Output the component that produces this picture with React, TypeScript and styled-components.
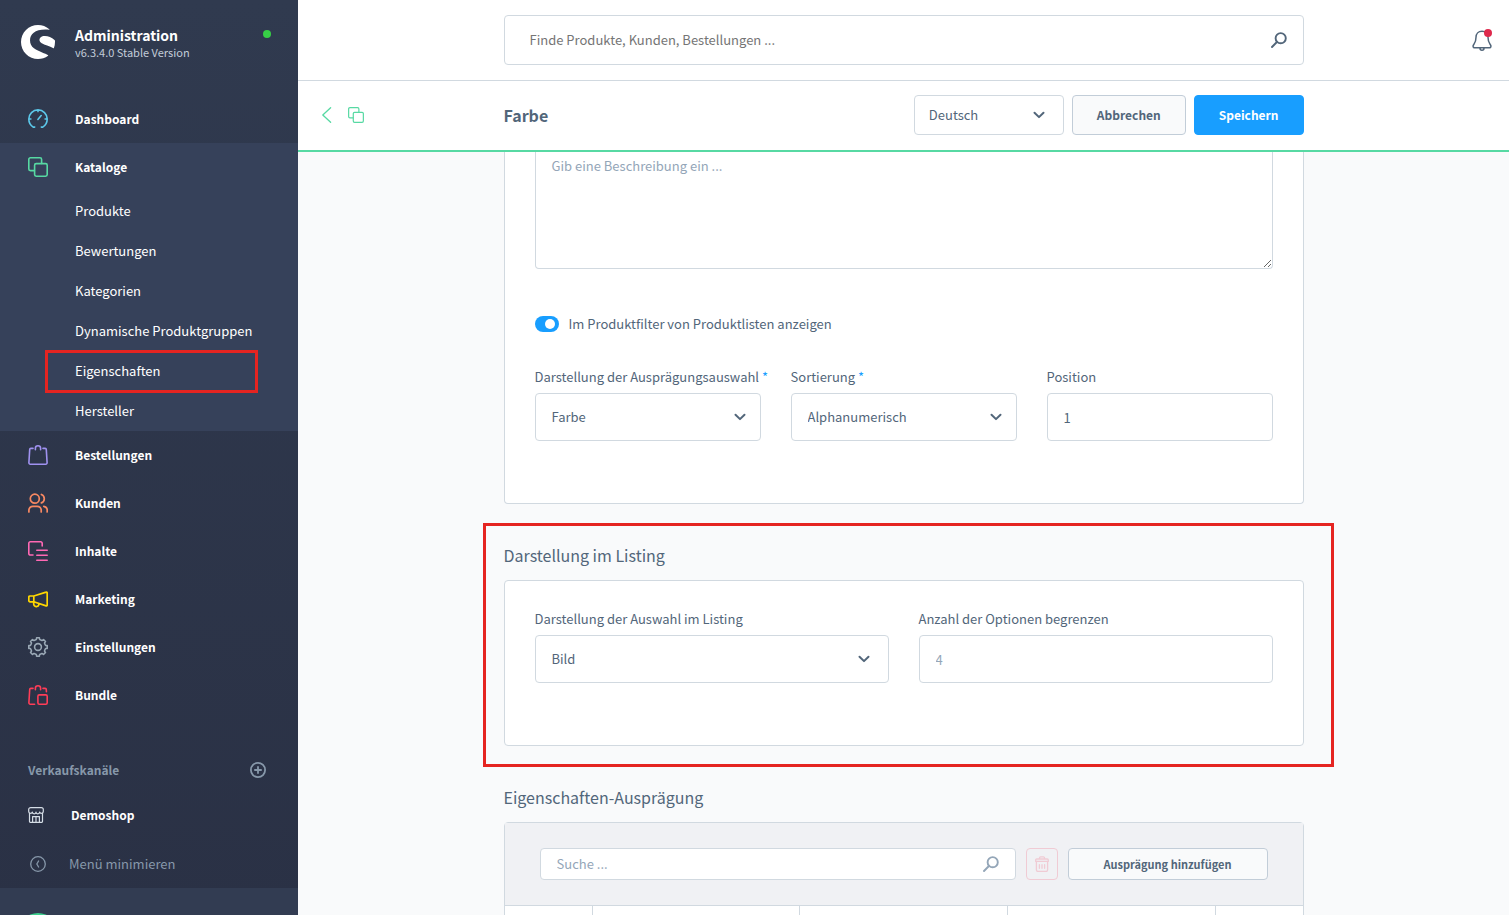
import React, { useState } from "react";
import styled, { createGlobalStyle } from "styled-components";
import { SiShopware } from "react-icons/si";

const color = {
  text: "#52667a",
  muted: "#94a6b8",
  border: "#d1d9e0",
  green: "#57d9a3",
  blue: "#189eff",
  page: "#f9fafb",
  mark: "#e52421",
};

const GlobalStyle = createGlobalStyle`
  *, *::before, *::after { box-sizing: border-box; }
  body {
    margin: 0;
    background: ${color.page};
    color: ${color.text};
    font-family: "Noto Sans CJK JP", "Open Sans", sans-serif;
    font-size: 13px;
    line-height: 20px;
  }
  button, input, select, textarea { font: inherit; color: inherit; }
  button { cursor: pointer; }
  h1, h2, p, ul { margin: 0; padding: 0; }
  ul { list-style: none; }
  a { color: inherit; text-decoration: none; }
`;

/* ---------- icons ---------- */

const Stroke = styled.svg.attrs({ fill: "none", stroke: "currentColor", "aria-hidden": true })`
  display: block;
  flex: none;
  stroke-linecap: round;
  stroke-linejoin: round;
`;

type IconProps = { size?: number; weight?: number };

const DashboardIcon = () => (
  <Stroke width="20" height="20" viewBox="0 0 20 20" strokeWidth="1.6">
    <path d="M6.7 18.1H5.2C2.5 16.5.8 13.6.8 10.1a9.2 9.2 0 0 1 18.4 0c0 3.5-1.7 6.4-4.4 8h-1.5M1 10h1.9M17.1 10H19M10 1v1.6M9.9 10.4l3.3-3.9" />
  </Stroke>
);

const CopyIcon = ({ size = 20, weight = 1.6 }: IconProps) => (
  <Stroke width={size} height={size} viewBox="0 0 20 20" strokeWidth={weight}>
    <path d="M6.4 13.6h-4A1.6 1.6 0 0 1 .8 12V2.4A1.6 1.6 0 0 1 2.4.8H12a1.6 1.6 0 0 1 1.6 1.6v4" />
    <rect x="6.6" y="6.6" width="12.6" height="12.6" rx="1.6" />
  </Stroke>
);

const BagIcon = () => (
  <Stroke width="20" height="20" viewBox="0 0 20 20" strokeWidth="1.6">
    <path d="M5 3.4H2.9a1.2 1.2 0 0 0-1.2 1.2L.9 17.7a1.4 1.4 0 0 0 1.4 1.5h15.4a1.4 1.4 0 0 0 1.4-1.5l-.8-13.1a1.2 1.2 0 0 0-1.2-1.2H15" />
    <path d="M7.4 4.8V3.2a2.6 2.4 0 0 1 5.2 0v1.6" />
  </Stroke>
);

const UsersIcon = () => (
  <Stroke width="20" height="20" viewBox="0 0 20 20" strokeWidth="1.7">
    <circle cx="6.8" cy="5.7" r="4.5" />
    <path d="M.9 18.9v-1.6a4 4 0 0 1 4-4h4.3a4 4 0 0 1 4 4v1.6M13.4 1.5a4.5 4.5 0 0 1 0 8.4M15.8 13.3a4 4 0 0 1 3.4 4v1.6" />
  </Stroke>
);

const ContentIcon = () => (
  <Stroke width="20" height="20" viewBox="0 0 20 20" strokeWidth="1.6">
    <path d="M5 14H2.3A1.5 1.5 0 0 1 .8 12.5V2.3A1.5 1.5 0 0 1 2.3.8h10.4a1.5 1.5 0 0 1 1.5 1.5V5M8.8 9.2h10.4M8.8 14.2h10.4M8.8 19.2h10.4" />
  </Stroke>
);

const MegaphoneIcon = () => (
  <Stroke width="20" height="20" viewBox="0 0 20 20" strokeWidth="1.7">
    <path d="M5.8 7H2A1.2 1.2 0 0 0 .8 8.2v3.4A1.2 1.2 0 0 0 2 12.8h3.8zM5.8 7l12.3-3.9a.8.8 0 0 1 1.1.8v12.2a.8.8 0 0 1-1.1.8L5.8 12.8M5.7 13v2a2.7 2.7 0 0 0 5.3.6l.2-.9" />
  </Stroke>
);

const gearOutline = (() => {
  const points: string[] = [];
  for (let tooth = 0; tooth < 8; tooth++) {
    const base = (tooth * Math.PI) / 4;
    [
      [-0.3, 7.5],
      [-0.2, 7.9],
      [-0.15, 9.3],
      [0.15, 9.3],
      [0.2, 7.9],
      [0.3, 7.5],
    ].forEach(([offset, radius]) => {
      const x = 10 + radius * Math.sin(base + offset);
      const y = 10 - radius * Math.cos(base + offset);
      points.push(`${x.toFixed(2)} ${y.toFixed(2)}`);
    });
  }
  return `M${points.join("L")}Z`;
})();

const GearIcon = () => (
  <Stroke width="20" height="20" viewBox="0 0 20 20" strokeWidth="1.6">
    <path d={gearOutline} />
    <circle cx="10" cy="10" r="3.4" />
  </Stroke>
);

const BundleIcon = () => (
  <Stroke width="20" height="20" viewBox="0 0 20 20" strokeWidth="1.6">
    <path d="M5 3.4H2.9a1.2 1.2 0 0 0-1.2 1.2L.9 17.7a1.4 1.4 0 0 0 1.4 1.5h4.3M15 3.4h2.1a1.2 1.2 0 0 1 1.2 1.2l.1 2M7.4 4.8V3.2a2.6 2.4 0 0 1 5.2 0v1.6" />
    <rect x="9.9" y="9.9" width="9.3" height="9.3" rx="1.4" />
  </Stroke>
);

const PlusCircleIcon = () => (
  <Stroke width="16" height="16" viewBox="0 0 16 16" strokeWidth="1.8">
    <circle cx="8" cy="8" r="7.1" />
    <path d="M8 4.9v6.2M4.9 8h6.2" />
  </Stroke>
);

const StoreIcon = () => (
  <Stroke width="16" height="16" viewBox="0 0 16 16" strokeWidth="1.2">
    <path d="M1.5 6.5v8.1a.8.8 0 0 0 .8.8h11.4a.8.8 0 0 0 .8-.8V6.5M.7 4.4V2.6a2 2 0 0 1 2-2h10.6a2 2 0 0 1 2 2v1.8a1.9 1.9 0 0 1-3.7.6 1.8 1.8 0 0 1-3.6 0 1.8 1.8 0 0 1-3.6 0 1.9 1.9 0 0 1-3.7-.6zM4.6 15.2V9.6h6.8v5.6M8 9.8v5.4" />
  </Stroke>
);

const CollapseIcon = () => (
  <Stroke width="16" height="16" viewBox="0 0 16 16" strokeWidth="1.3">
    <circle cx="8" cy="8" r="7.3" />
    <path d="M8.6 5L6.8 8l1.8 3" />
  </Stroke>
);

const SearchIcon = () => (
  <Stroke width="16" height="16" viewBox="0 0 16 16" strokeWidth="1.9">
    <circle cx="9.7" cy="6.2" r="5.1" />
    <path d="M5.9 10L1 15" />
  </Stroke>
);

const BellIcon = () => (
  <Stroke width="20" height="22" viewBox="0 0 20 22" strokeWidth="1.5">
    <path d="M10 2.2c-3.7 0-6 2.5-6 6.1 0 4.8-1 5.6-2.4 7.4-1 1.400-.6 3 .9 3h15c1.500 0 1.900-1.600.9-3C17 13.900 16 13.100 16 8.300c0-3.600-2.300-6.100-6-6.100zM8 19.200a2 2 0 0 0 4 0" />
  </Stroke>
);

const TrashIcon = () => (
  <Stroke width="14" height="16" viewBox="0 0 14 16" strokeWidth="1.3">
    <path d="M4.5 2.9V2A1.2 1.2 0 0 1 5.7.8h2.6A1.2 1.2 0 0 1 9.5 2v.9M.7 4a1 1 0 0 1 1-1h10.6a1 1 0 0 1 1 1v1.4H.7zM1.4 5.6v8.2A1.6 1.6 0 0 0 3 15.4h8a1.6 1.6 0 0 0 1.6-1.6V5.6M4.4 8.7v3.6M7 8.7v3.6M9.6 8.7v3.6" />
  </Stroke>
);

const ChevronDownIcon = () => (
  <Stroke width="12" height="8" viewBox="0 0 12 8" strokeWidth="2">
    <path d="M1.5 1.7L6 6.1l4.5-4.4" />
  </Stroke>
);

const ChevronLeftIcon = () => (
  <Stroke width="10" height="16" viewBox="0 0 10 16" strokeWidth="1.3">
    <path d="M8.6.7L.8 8l7.8 7.3" />
  </Stroke>
);

/* ---------- shell ---------- */

const Shell = styled.div`
  display: flex;
  height: 100vh;
  overflow: hidden;
`;

const Sidebar = styled.aside`
  display: flex;
  flex-direction: column;
  flex: none;
  width: 298px;
  overflow: hidden;
  background: linear-gradient(#303a4f, #2a3145);
  color: #fff;
  > * { flex: none; }
`;

const Brand = styled.div`
  display: flex;
  align-items: flex-start;
  height: 95px;
  padding: 25px 27px 0 21px;
`;

const BrandLogo = styled(SiShopware)`
  flex: none;
  width: 34px;
  height: 34px;
  margin-right: 20px;
`;

const BrandText = styled.div`
  flex: 1;
`;

const BrandName = styled.p`
  font-size: 14px;
  font-weight: 600;
`;

const BrandVersion = styled.p`
  color: #c2ccd8;
  font-size: 11px;
  line-height: 14px;
`;

const StatusDot = styled.span`
  width: 8px;
  height: 8px;
  margin-top: 5px;
  border-radius: 50%;
  background: #37d046;
`;

const NavGroup = styled.li<{ $open?: boolean }>`
  background: ${(p) => (p.$open ? "#36415a" : "transparent")};
`;

const NavLink = styled.a<{ $tint: string }>`
  display: flex;
  align-items: center;
  gap: 27px;
  height: 48px;
  padding-left: 28px;
  font-size: 12px;
  font-weight: 600;
  svg { color: ${(p) => p.$tint}; }
`;

const SubItem = styled.li`
  position: relative;
`;

const SubLink = styled.a`
  display: flex;
  align-items: center;
  height: 40px;
  padding-left: 75px;
`;

const SubMark = styled.span`
  position: absolute;
  inset: -1px 40px -2px 45px;
  border: 3px solid ${color.mark};
  pointer-events: none;
`;

const ChannelHeader = styled.div`
  display: flex;
  align-items: center;
  justify-content: space-between;
  height: 20px;
  margin-top: 41px;
  padding: 0 32px 0 28px;
  color: #8798aa;
  font-size: 12px;
  font-weight: 600;
`;

const IconButton = styled.button`
  display: inline-flex;
  align-items: center;
  justify-content: center;
  padding: 0;
  border: 0;
  background: none;
`;

const ChannelLink = styled.a`
  display: flex;
  align-items: center;
  gap: 27px;
  height: 48px;
  margin-top: 11px;
  padding-left: 28px;
  font-size: 12px;
  font-weight: 600;
  svg { color: #d5dde6; }
`;

const CollapseButton = styled.button`
  display: flex;
  align-items: center;
  gap: 23px;
  height: 48px;
  margin-top: 1px;
  padding: 0 0 0 30px;
  border: 0;
  background: none;
  color: #8798aa;
`;

const UserBar = styled.div`
  padding: 25px 18px;
  background: #323c52;
`;

const Avatar = styled.div`
  width: 40px;
  height: 40px;
  border-radius: 50%;
  background: #3ecf8e;
`;

const Main = styled.main`
  display: flex;
  flex-direction: column;
  flex: 1;
  min-width: 0;
`;

const HeaderRow = styled.header`
  display: grid;
  flex: none;
  grid-template-columns: 1fr minmax(0, 800px) 1fr;
  align-items: center;
  background: #fff;
`;

const TopBar = styled(HeaderRow)`
  padding: 15px 0;
  border-bottom: 1px solid ${color.border};
`;

const TitleBar = styled(HeaderRow)`
  padding: 14px 0 15px;
  border-bottom: 2px solid ${color.green};
`;

const SearchBox = styled.div<{ $size: "large" | "small" }>`
  display: flex;
  align-items: center;
  flex: 1;
  grid-column: 2;
  height: ${(p) => (p.$size === "large" ? 50 : 32)}px;
  padding: 0 16px 0 ${(p) => (p.$size === "large" ? 25 : 16)}px;
  border: 1px solid ${color.border};
  border-radius: 4px;
  background: #fff;
  color: ${(p) => (p.$size === "large" ? color.text : color.muted)};
  input {
    flex: 1;
    min-width: 0;
    padding: 0;
    border: 0;
    outline: 0;
    background: none;
  }
  input::placeholder {
    color: ${(p) => (p.$size === "large" ? "#757575" : color.muted)};
    opacity: 1;
  }
`;

const BellButton = styled(IconButton)`
  position: relative;
  justify-self: end;
  margin-right: 17px;
`;

const BellBadge = styled.span`
  position: absolute;
  top: 0;
  right: 0;
  width: 8px;
  height: 8px;
  border-radius: 50%;
  background: #de294c;
`;

const TitleActions = styled.div`
  display: flex;
  gap: 16px;
  padding-left: 24px;
  color: ${color.green};
`;

const TitleContent = styled.div`
  display: flex;
  align-items: center;
  gap: 8px;
`;

const PageTitle = styled.h1`
  flex: 1;
  font-size: 16px;
  font-weight: 600;
  line-height: 24px;
`;

const Button = styled.button<{ $primary?: boolean; $small?: boolean }>`
  height: ${(p) => (p.$small ? 32 : 40)}px;
  width: ${(p) => (p.$small ? "200px" : "auto")};
  padding: 0 24px;
  border: 1px solid ${(p) => (p.$primary ? color.blue : "#c2cdd8")};
  border-radius: 4px;
  background: ${(p) => (p.$primary ? color.blue : color.page)};
  color: ${(p) => (p.$primary ? "#fff" : color.text)};
  font-size: ${(p) => (p.$small ? 11 : 12)}px;
  font-weight: 600;
`;

const DeleteButton = styled(IconButton)`
  flex: none;
  width: 32px;
  height: 32px;
  border: 1px solid #f0cbd4;
  border-radius: 4px;
  color: #f0cbd4;
`;

/* ---------- form ---------- */

const Content = styled.div`
  display: grid;
  flex: 1;
  grid-template-columns: minmax(0, 800px);
  align-content: start;
  justify-content: center;
  min-height: 0;
  overflow: hidden;
`;

const Card = styled.div<{ $continued?: boolean }>`
  padding: ${(p) => (p.$continued ? "0" : "28px")} 30px 62px;
  border: 1px solid ${color.border};
  border-top-width: ${(p) => (p.$continued ? 0 : 1)}px;
  border-radius: ${(p) => (p.$continued ? "0 0 4px 4px" : "4px")};
  background: #fff;
`;

const Description = styled.textarea`
  display: block;
  width: 100%;
  height: 117px;
  padding: 4px 16px;
  border: 1px solid ${color.border};
  border-top: 0;
  border-radius: 0 0 4px 4px;
  outline: 0;
  resize: vertical;
  &::placeholder { color: ${color.muted}; opacity: 1; }
`;

const SwitchLabel = styled.label`
  display: flex;
  align-items: center;
  gap: 10px;
  margin: 45px 0 33px;
`;

const Switch = styled.input.attrs({ type: "checkbox", role: "switch" })`
  display: flex;
  flex: none;
  justify-content: flex-start;
  appearance: none;
  width: 24px;
  height: 16px;
  margin: 0;
  padding: 3px 4px;
  border-radius: 8px;
  background: ${color.border};
  &::before {
    content: "";
    width: 10px;
    height: 10px;
    border-radius: 50%;
    background: #fff;
  }
  &:checked {
    justify-content: flex-end;
    background: ${color.blue};
  }
`;

const FieldRow = styled.div`
  display: grid;
  grid-auto-columns: minmax(0, 1fr);
  grid-auto-flow: column;
  gap: 30px;
`;

const Field = styled.div`
  display: flex;
  flex-direction: column;
  gap: 6px;
  label { white-space: nowrap; }
`;

const Required = styled.span`
  color: ${color.blue};
`;

const TextInput = styled.input`
  width: 100%;
  height: 48px;
  padding: 0 16px;
  border: 1px solid ${color.border};
  border-radius: 4px;
  outline: 0;
  background: #fff;
  &::placeholder { color: ${color.muted}; opacity: 1; }
`;

const SelectWrap = styled.div<{ $inset: number; $width?: string }>`
  position: relative;
  width: ${(p) => p.$width ?? "100%"};
  svg {
    position: absolute;
    top: calc(50% - 4px);
    right: ${(p) => p.$inset}px;
    pointer-events: none;
  }
`;

const SelectInput = styled.select<{ $compact?: boolean }>`
  display: block;
  appearance: none;
  width: 100%;
  height: ${(p) => (p.$compact ? 40 : 48)}px;
  padding: 0 ${(p) => (p.$compact ? 14 : 16)}px;
  border: 1px solid ${color.border};
  border-radius: 4px;
  outline: 0;
  background: #fff;
`;

const Section = styled.section`
  position: relative;
  padding-top: 38px;
`;

const SectionTitle = styled.h2`
  margin-bottom: 12px;
  font-size: 16px;
  font-weight: 400;
  line-height: 26px;
`;

const SectionMark = styled.span`
  position: absolute;
  inset: 19px -30px -21px -21px;
  border: 3px solid ${color.mark};
  pointer-events: none;
`;

const OptionCard = styled.div`
  border: 1px solid ${color.border};
  border-radius: 4px 4px 0 0;
  background: #fff;
`;

const OptionToolbar = styled.div`
  display: flex;
  align-items: center;
  gap: 10px;
  height: 82px;
  padding: 0 35px;
  background: #f0f1f4;
`;

const OptionTable = styled.table`
  width: 100%;
  border-collapse: separate;
  border-spacing: 0;
  table-layout: fixed;
  th {
    height: 48px;
    padding: 0;
    border: solid ${color.border};
    border-width: 1px 1px 0 0;
  }
  th:first-child { width: 88px; }
  th:last-child {
    width: 87px;
    border-right: 0;
  }
`;

type SelectFieldProps = { id: string; label: string; value: string; inset: number; required?: boolean };

const SelectField = ({ id, label, value, inset, required }: SelectFieldProps) => (
  <Field>
    <label htmlFor={id}>
      {label}
      {required && <Required> *</Required>}
    </label>
    <SelectWrap $inset={inset}>
      <SelectInput id={id} defaultValue={value}>
        <option>{value}</option>
      </SelectInput>
      <ChevronDownIcon />
    </SelectWrap>
  </Field>
);

const catalogueLinks = [
  "Produkte",
  "Bewertungen",
  "Kategorien",
  "Dynamische Produktgruppen",
  "Eigenschaften",
  "Hersteller",
];

const navigation = [
  { label: "Dashboard", tint: "#5cc8ea", icon: <DashboardIcon /> },
  { label: "Kataloge", tint: color.green, icon: <CopyIcon />, links: catalogueLinks },
  { label: "Bestellungen", tint: "#a092f0", icon: <BagIcon /> },
  { label: "Kunden", tint: "#f88962", icon: <UsersIcon /> },
  { label: "Inhalte", tint: "#ff68b4", icon: <ContentIcon /> },
  { label: "Marketing", tint: "#ffd700", icon: <MegaphoneIcon /> },
  { label: "Einstellungen", tint: "#9aa8b5", icon: <GearIcon /> },
  { label: "Bundle", tint: "#ff3d58", icon: <BundleIcon /> },
];

export default function App() {
  const [inFilter, setInFilter] = useState(true);

  return (
    <>
      <GlobalStyle />
      <Shell>
        <Sidebar>
          <Brand>
            <BrandLogo aria-hidden />
            <BrandText>
              <BrandName>Administration</BrandName>
              <BrandVersion>v6.3.4.0 Stable Version</BrandVersion>
            </BrandText>
            <StatusDot />
          </Brand>
          <nav>
            <ul>
              {navigation.map(({ label, tint, icon, links }) => (
                <NavGroup key={label} $open={!!links}>
                  <NavLink href="#" $tint={tint}>
                    {icon}
                    {label}
                  </NavLink>
                  {links && (
                    <ul>
                      {links.map((link) => (
                        <SubItem key={link}>
                          <SubLink href="#">{link}</SubLink>
                          {link === "Eigenschaften" && <SubMark />}
                        </SubItem>
                      ))}
                    </ul>
                  )}
                </NavGroup>
              ))}
            </ul>
          </nav>
          <ChannelHeader>
            Verkaufskanäle
            <IconButton aria-label="Verkaufskanal hinzufügen">
              <PlusCircleIcon />
            </IconButton>
          </ChannelHeader>
          <ChannelLink href="#">
            <StoreIcon />
            Demoshop
          </ChannelLink>
          <CollapseButton>
            <CollapseIcon />
            Menü minimieren
          </CollapseButton>
          <UserBar>
            <Avatar />
          </UserBar>
        </Sidebar>

        <Main>
          <TopBar>
            <SearchBox $size="large">
              <input aria-label="Suche" placeholder="Finde Produkte, Kunden, Bestellungen ..." />
              <SearchIcon />
            </SearchBox>
            <BellButton aria-label="Benachrichtigungen">
              <BellIcon />
              <BellBadge />
            </BellButton>
          </TopBar>

          <TitleBar as="div">
            <TitleActions>
              <IconButton aria-label="Zurück">
                <ChevronLeftIcon />
              </IconButton>
              <IconButton aria-label="Duplizieren">
                <CopyIcon size={16} weight={1.5} />
              </IconButton>
            </TitleActions>
            <TitleContent>
              <PageTitle>Farbe</PageTitle>
              <SelectWrap $inset={19} $width="150px">
                <SelectInput $compact aria-label="Sprache" defaultValue="Deutsch">
                  <option>Deutsch</option>
                </SelectInput>
                <ChevronDownIcon />
              </SelectWrap>
              <Button>Abbrechen</Button>
              <Button $primary>Speichern</Button>
            </TitleContent>
          </TitleBar>

          <Content>
            <Card $continued>
              <Description aria-label="Beschreibung" placeholder="Gib eine Beschreibung ein ..." />
              <SwitchLabel>
                <Switch checked={inFilter} onChange={(e) => setInFilter(e.target.checked)} />
                Im Produktfilter von Produktlisten anzeigen
              </SwitchLabel>
              <FieldRow>
                <SelectField id="display" label="Darstellung der Ausprägungsauswahl" value="Farbe" inset={15} required />
                <SelectField id="sorting" label="Sortierung" value="Alphanumerisch" inset={15} required />
                <Field>
                  <label htmlFor="position">Position</label>
                  <TextInput id="position" defaultValue="1" />
                </Field>
              </FieldRow>
            </Card>

            <Section>
              <SectionTitle>Darstellung im Listing</SectionTitle>
              <Card>
                <FieldRow>
                  <SelectField id="listing" label="Darstellung der Auswahl im Listing" value="Bild" inset={19} />
                  <Field>
                    <label htmlFor="limit">Anzahl der Optionen begrenzen</label>
                    <TextInput id="limit" placeholder="4" />
                  </Field>
                </FieldRow>
              </Card>
              <SectionMark />
            </Section>

            <Section>
              <SectionTitle>Eigenschaften-Ausprägung</SectionTitle>
              <OptionCard>
                <OptionToolbar>
                  <SearchBox $size="small">
                    <input aria-label="Ausprägung suchen" placeholder="Suche ..." />
                    <SearchIcon />
                  </SearchBox>
                  <DeleteButton aria-label="Löschen">
                    <TrashIcon />
                  </DeleteButton>
                  <Button $small>Ausprägung hinzufügen</Button>
                </OptionToolbar>
                <OptionTable>
                  <thead>
                    <tr>
                      <th />
                      <th />
                      <th />
                      <th />
                      <th />
                    </tr>
                  </thead>
                </OptionTable>
              </OptionCard>
            </Section>
          </Content>
        </Main>
      </Shell>
    </>
  );
}
